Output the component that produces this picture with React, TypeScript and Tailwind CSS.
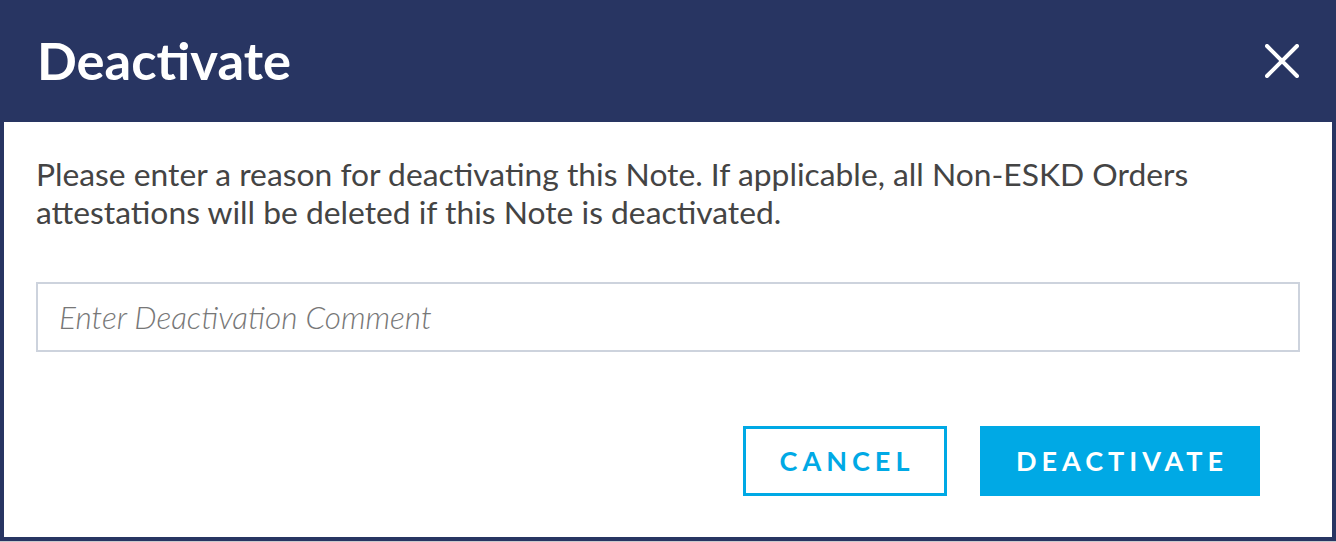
import React from "react";

export default function App() {
  return (
    <div className="h-[542px] w-[1336px] overflow-hidden bg-[#c8c9cd]" style={{ fontFamily: "Lato, 'Open Sans', sans-serif" }}>
      {/* Modal */}
      <div className="flex h-[541px] flex-col border-x-4 border-b-4 border-[#283562] bg-white">
        {/* Header */}
        <div className="-mx-1 flex h-[122px] shrink-0 items-center justify-between bg-[#283562] pl-[37px] pr-[37px]">
          <h1 className="pb-[2px] text-[52.5px] font-bold leading-none text-white">Deactivate</h1>
          <button className="flex h-[34px] w-[34px] items-center justify-center">
            <svg width="34" height="34" viewBox="0 0 34 34" fill="none">
              <path d="M2 2L32 32M32 2L2 32" stroke="white" strokeWidth="4" strokeLinecap="round" />
            </svg>
          </button>
        </div>

        {/* Body */}
        <div className="flex flex-1 flex-col px-[32px] pt-[33px]">
          <p className="max-w-[1200px] text-[31.8px] leading-[38px] text-[#444444]">
            Please enter a reason for deactivating this Note. If applicable, all Non-ESKD Orders attestations will be deleted if this Note is deactivated.
          </p>

          <input
            className="mt-[51px] h-[70px] w-[1264px] border-2 border-[#cdd3dd] px-[21px] text-[31.5px] font-light italic text-[#444] outline-none placeholder:text-[#777777]"
            placeholder="Enter Deactivation Comment"
          />

          <div className="mt-[74px] flex justify-end gap-[33px] pr-[40px]">
            <button className="flex h-[70px] w-[204px] items-center justify-center border-[3px] border-[#00a9e5] pl-[4px] text-[27px] font-bold tracking-[5px] text-[#00a9e5]">
              CANCEL
            </button>
            <button className="flex h-[70px] w-[280px] items-center justify-center bg-[#00a9e5] pl-[4px] text-[27px] font-bold tracking-[5px] text-white">
              DEACTIVATE
            </button>
          </div>
        </div>
      </div>

      {/* Page content behind the modal */}
      <div className="pl-[310px] text-[30px] font-bold leading-none text-[#2a2a2a]">Notes</div>
    </div>
  );
}
